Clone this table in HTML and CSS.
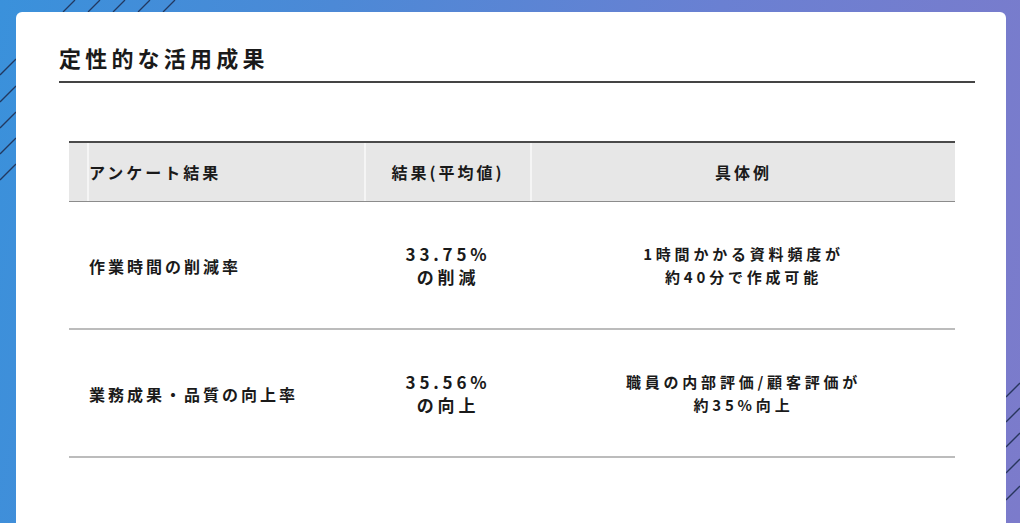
FILE: index.html
```html
<!DOCTYPE html>
<html lang="ja">
<head>
<meta charset="utf-8">
<title>定性的な活用成果</title>
<link rel="stylesheet" href="styles.css">
</head>
<body>
<div class="page">
  <svg class="stripes" width="1020" height="523" viewBox="0 0 1020 523" aria-hidden="true">
    <g stroke="#1f2f52" stroke-width="1.3" stroke-opacity="0.9">
      <line x1="63" y1="12" x2="75" y2="0"/>
      <line x1="88" y1="12" x2="100" y2="0"/>
      <line x1="113" y1="12" x2="125" y2="0"/>
      <line x1="138" y1="12" x2="150" y2="0"/>
      <line x1="163" y1="12" x2="175" y2="0"/>
      <line x1="0" y1="75" x2="16" y2="59"/>
      <line x1="0" y1="102" x2="16" y2="86"/>
      <line x1="0" y1="128" x2="16" y2="112"/>
      <line x1="0" y1="154" x2="16" y2="138"/>
      <line x1="0" y1="180" x2="16" y2="164"/>
      <line x1="1006" y1="397" x2="1020" y2="383"/>
      <line x1="1006" y1="422" x2="1020" y2="408"/>
      <line x1="1006" y1="447" x2="1020" y2="433"/>
      <line x1="1006" y1="473" x2="1020" y2="459"/>
      <line x1="1006" y1="500" x2="1020" y2="486"/>
    </g>
  </svg>
  <main class="card">
    <h1 class="title">定性的な活用成果</h1>
    <div class="table">
      <div class="row head">
        <div class="cell spacer"></div>
        <div class="cell label">アンケート結果</div>
        <div class="cell center">結果(平均値)</div>
        <div class="cell center">具体例</div>
      </div>
      <div class="row body">
        <div class="cell spacer"></div>
        <div class="cell label">作業時間の削減率</div>
        <div class="cell center value">33.75%<br>の削減</div>
        <div class="cell center desc">1時間かかる資料頻度が<br>約40分で作成可能</div>
      </div>
      <div class="row body">
        <div class="cell spacer"></div>
        <div class="cell label">業務成果・品質の向上率</div>
        <div class="cell center value">35.56%<br>の向上</div>
        <div class="cell center desc">職員の内部評価/顧客評価が<br>約35%向上</div>
      </div>
    </div>
  </main>
</div>
</body>
</html>
```

FILE: styles.css
```css
* { box-sizing: border-box; }
html, body { margin: 0; padding: 0; }
body {
  font-family: "Noto Sans CJK JP", "Noto Sans", sans-serif;
  color: #1a1a1a;
}
.page {
  position: relative;
  width: 1020px;
  height: 523px;
  overflow: hidden;
  padding: 12px 14px 0 16px;
  background: linear-gradient(100deg, #3a91db 0%, #4c89d6 30%, #6a80d2 65%, #7c7bcb 100%);
}
.stripes {
  position: absolute;
  left: 0;
  top: 0;
}
.card {
  position: relative;
  height: 511px;
  background: #fff;
  border-radius: 6px 6px 0 0;
  padding: 29px 31px 0 43px;
}
.title {
  margin: 0;
  font-size: 22px;
  line-height: 32px;
  font-weight: 700;
  letter-spacing: 4.2px;
  padding-bottom: 8px;
  border-bottom: 2px solid #444;
}
.table {
  margin: 58px 20px 0 10px;
}
.row {
  display: grid;
  grid-template-columns: 18px 275px 164px 423px;
  column-gap: 2px;
}
.row.head {
  background: #f5f5f5;
  border-top: 2px solid #4a4a4a;
  border-bottom: 1px solid #8c8c8c;
  height: 61px;
}
.row.head .cell {
  background: #e7e7e7;
  font-size: 16px;
  letter-spacing: 3px;
}
.row.body {
  height: 128px;
  border-bottom: 2px solid #bcbcbc;
}
.cell {
  display: flex;
  align-items: center;
  font-weight: 700;
}
.cell.center {
  justify-content: center;
  text-align: center;
}
.label {
  font-size: 16px;
  letter-spacing: 3px;
}
.row.body .label { padding-top: 2px; }
.value {
  font-size: 17px;
  line-height: 23px;
  letter-spacing: 3.8px;
}
.desc {
  font-size: 15px;
  line-height: 23px;
  letter-spacing: 3.8px;
}
```
